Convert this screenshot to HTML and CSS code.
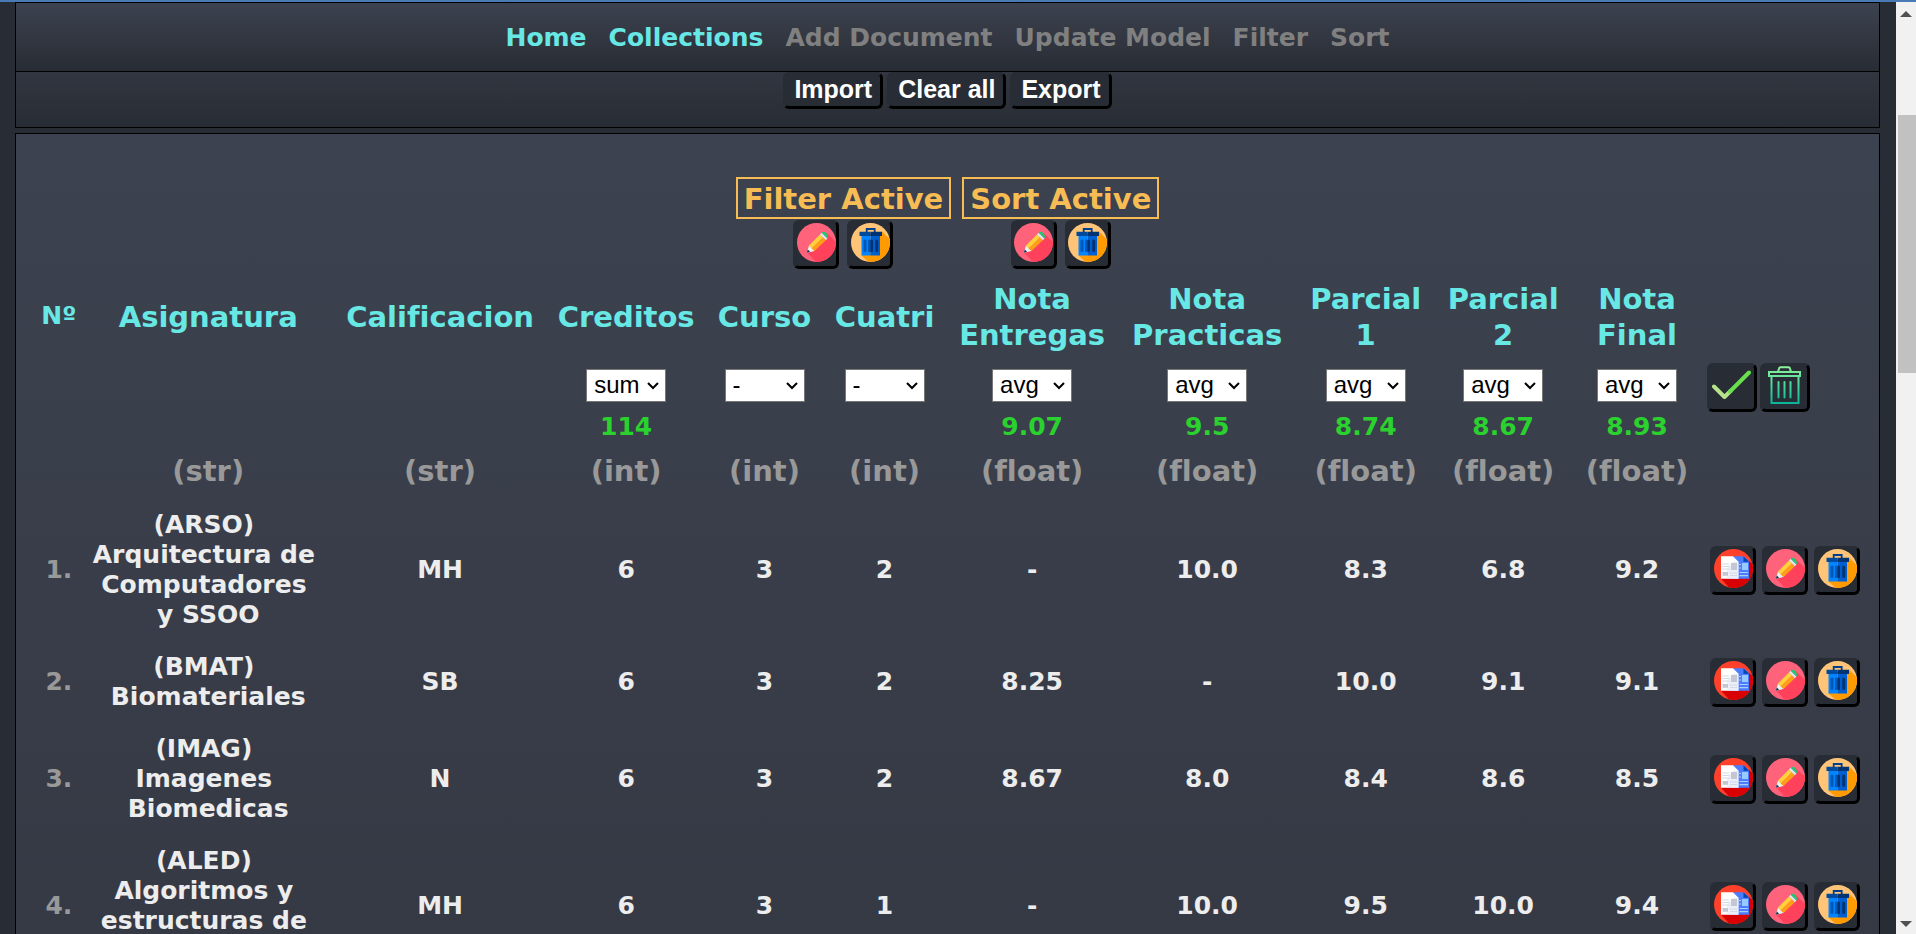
FILE: index.html
```html
<!DOCTYPE html>
<html lang="es">
<head>
<meta charset="utf-8">
<title>Collections</title>
<link rel="stylesheet" href="styles.css">
</head>
<body>
<svg class="sprite" aria-hidden="true">
  <defs>
    <linearGradient id="mint" x1="0" y1="0" x2="0" y2="39" gradientUnits="userSpaceOnUse">
      <stop offset="0" stop-color="#8ff59c"/><stop offset="1" stop-color="#05b29a"/>
    </linearGradient>
    <clipPath id="disc"><circle cx="19.5" cy="19.5" r="19.5"/></clipPath>
  </defs>
  <symbol id="pencil" viewBox="0 0 39 39">
    <g clip-path="url(#disc)">
      <path fill="#ff637b" d="M0 0h39v39H0z"/>
      <path fill="#ff415b" d="M10 29.500 29.500 10 42 22v20H22z"/>
      <path fill="#e8f4ee" d="M9.800 29.800 12 22.500 17.500 28z"/>
      <path fill="#14344f" d="m9.800 29.800 1-3.200 2.300 2.200z"/>
      <path fill="#ffd23c" d="M12 22.500 23 11.500l3 3-11.200 11z"/>
      <path fill="#ff9f19" d="m14.800 25.500 11.200-11 2.800 2.700L17.500 28z"/>
      <path fill="#dce6ee" d="m23 11.500 1.700-1.700 5.800 5.700-1.700 1.700z"/>
      <path fill="#1fc978" d="M24.700 9.800c1.500-1.400 3-1.200 4.400.2s2.700 3.700 1.400 5.500z"/>
    </g>
  </symbol>
  <symbol id="bin" viewBox="0 0 39 39">
    <g clip-path="url(#disc)">
      <path fill="#ffc477" d="M0 0h39v39H0z"/>
      <path fill="#ff9b00" d="M31 8.500 42 19.500V42H21l-10.500-9.500z"/>
      <path fill="none" stroke="#003f8c" stroke-width="1.800" d="M15.700 9.500V6h8v3.500"/>
      <path fill="#0084ff" d="M10.500 11h9v21.500h-9z"/>
      <path fill="#005fd0" d="M19.500 11H29v21.500h-9.500z"/>
      <path fill="#004a9c" d="M8.500 8.700h11V13h-11z"/>
      <path fill="#003374" d="M19.500 8.700H31V13H19.500z"/>
      <g stroke-width="3" stroke-linecap="round">
        <path stroke="#0057b8" d="M14 18v9.500M18.500 18v9.500"/>
        <path stroke="#003374" d="M20.500 18v9.500M25.700 18v9.500"/>
      </g>
      <path fill="#0057b8" d="M17 17h2.500v12H17z"/>
    </g>
  </symbol>
  <symbol id="doc" viewBox="0 0 39 39">
    <g clip-path="url(#disc)">
      <path fill="#ff412b" d="M0 0h39v39H0z"/>
      <path fill="#d80000" d="M35 11.500 42 18v24H18L7 29.500z"/>
      <path fill="#4a7dff" d="M18 7.200h12l5 5v17.500H18z"/>
      <path fill="#0046b5" d="M29.500 7.200 35 12.700h-5.500z"/>
      <path fill="#fff" d="M7 7.200h12l5.500 5.500v17H7z"/>
      <path fill="#dce4f8" d="M19 12.700h5.500v17H13V20z" opacity=".6"/>
      <path fill="#c4c6d0" d="M17 14h6v7h-6zM8.500 23h5.500v3.800H8.500z"/>
      <path stroke="#d5d9e6" d="M8.500 15h7M8.500 17.500h7M8.500 20h7M16 24h7M16 26.500h7"/>
      <path fill="#98c9ff" d="M28 14h6v7h-6z"/>
      <path stroke="#a8ceff" stroke-width="1.200" d="M25.500 23.500H34M25.500 26.700H34M25 15.500h2M25 19h2"/>
    </g>
  </symbol>
  <symbol id="check" viewBox="0 0 39 39">
    <g fill="none" stroke-width="4" stroke-linecap="round" stroke-linejoin="round">
      <path stroke="#b5e389" d="M2 20.500 12.500 31 19 24.500"/>
      <path stroke="#68df4c" d="M18 25.500 37 6.500"/>
    </g>
  </symbol>
  <symbol id="can" viewBox="0 0 39 39">
    <g fill="none" stroke="url(#mint)" stroke-width="2">
      <path d="M4 6h31v4H4zM6.500 10v27h27V10M13 6l1-3.500Q14.300 1.200 15.500 1.200h8q1.200 0 1.500 1.300L26 6"/>
      <path d="M13.500 16v15.500M19.500 16v15.500M25.500 16v15.500" stroke-linecap="round"/>
    </g>
  </symbol>
</svg>

<div class="window">
  <div class="page">
    <nav class="bar nav">
      <a href="#home">Home</a>
      <a href="#collections">Collections</a>
      <a class="off" href="#add">Add Document</a>
      <a class="off" href="#update">Update Model</a>
      <a class="off" href="#filter">Filter</a>
      <a class="off" href="#sort">Sort</a>
    </nav>
    <div class="bar tools">
      <button type="button" class="btn">Import</button>
      <button type="button" class="btn">Clear all</button>
      <button type="button" class="btn">Export</button>
    </div>

    <main class="panel">
      <div class="states">
        <section class="state">
          <h2>Filter Active</h2>
          <div class="pair">
            <button type="button" class="btn icon" aria-label="Edit filter"><svg><use href="#pencil"/></svg></button>
            <button type="button" class="btn icon" aria-label="Delete filter"><svg><use href="#bin"/></svg></button>
          </div>
        </section>
        <section class="state">
          <h2>Sort Active</h2>
          <div class="pair">
            <button type="button" class="btn icon" aria-label="Edit sort"><svg><use href="#pencil"/></svg></button>
            <button type="button" class="btn icon" aria-label="Delete sort"><svg><use href="#bin"/></svg></button>
          </div>
        </section>
      </div>

      <table class="grid">
        <colgroup>
          <col class="c-num"><col class="c-name"><col class="c-grade"><col class="c-cred"><col class="c-year"><col class="c-term">
          <col class="c-work"><col class="c-prac"><col class="c-p1"><col class="c-p2"><col class="c-final"><col class="c-act">
        </colgroup>
        <thead>
          <tr class="titles">
            <th class="small">Nº</th><th>Asignatura</th><th>Calificacion</th><th>Creditos</th><th>Curso</th><th>Cuatri</th>
            <th>Nota Entregas</th><th>Nota Practicas</th><th>Parcial 1</th><th>Parcial 2</th><th>Nota Final</th><td></td>
          </tr>
          <tr class="totals">
            <td></td><td></td><td></td>
            <td><select aria-label="Creditos"><option>sum</option><option>avg</option><option>-</option></select><output>114</output></td>
            <td><select aria-label="Curso"><option>-</option><option>sum</option><option>avg</option></select></td>
            <td><select aria-label="Cuatri"><option>-</option><option>sum</option><option>avg</option></select></td>
            <td><select aria-label="Nota Entregas"><option>avg</option><option>sum</option><option>-</option></select><output>9.07</output></td>
            <td><select aria-label="Nota Practicas"><option>avg</option><option>sum</option><option>-</option></select><output>9.5</output></td>
            <td><select aria-label="Parcial 1"><option>avg</option><option>sum</option><option>-</option></select><output>8.74</output></td>
            <td><select aria-label="Parcial 2"><option>avg</option><option>sum</option><option>-</option></select><output>8.67</output></td>
            <td><select aria-label="Nota Final"><option>avg</option><option>sum</option><option>-</option></select><output>8.93</output></td>
            <td class="confirm"><div class="apply">
              <button type="button" class="btn icon wide" aria-label="Apply"><svg><use href="#check"/></svg></button>
              <button type="button" class="btn icon wide" aria-label="Clear"><svg><use href="#can"/></svg></button>
            </div></td>
          </tr>
          <tr class="types">
            <td></td><td>(str)</td><td>(str)</td><td>(int)</td><td>(int)</td><td>(int)</td>
            <td>(float)</td><td>(float)</td><td>(float)</td><td>(float)</td><td>(float)</td><td></td>
          </tr>
        </thead>
        <tbody>
          <tr>
            <td class="num">1.</td><td class="name">(ARSO) Arquitectura de Computadores y SSOO</td><td>MH</td><td>6</td><td>3</td><td>2</td>
            <td>-</td><td>10.0</td><td>8.3</td><td>6.8</td><td>9.2</td>
            <td class="act"><div class="trio">
              <button type="button" class="btn icon" aria-label="Duplicate"><svg><use href="#doc"/></svg></button>
              <button type="button" class="btn icon" aria-label="Edit"><svg><use href="#pencil"/></svg></button>
              <button type="button" class="btn icon" aria-label="Delete"><svg><use href="#bin"/></svg></button>
            </div></td>
          </tr>
          <tr>
            <td class="num">2.</td><td class="name">(BMAT) Biomateriales</td><td>SB</td><td>6</td><td>3</td><td>2</td>
            <td>8.25</td><td>-</td><td>10.0</td><td>9.1</td><td>9.1</td>
            <td class="act"><div class="trio">
              <button type="button" class="btn icon" aria-label="Duplicate"><svg><use href="#doc"/></svg></button>
              <button type="button" class="btn icon" aria-label="Edit"><svg><use href="#pencil"/></svg></button>
              <button type="button" class="btn icon" aria-label="Delete"><svg><use href="#bin"/></svg></button>
            </div></td>
          </tr>
          <tr>
            <td class="num">3.</td><td class="name">(IMAG) Imagenes Biomedicas</td><td>N</td><td>6</td><td>3</td><td>2</td>
            <td>8.67</td><td>8.0</td><td>8.4</td><td>8.6</td><td>8.5</td>
            <td class="act"><div class="trio">
              <button type="button" class="btn icon" aria-label="Duplicate"><svg><use href="#doc"/></svg></button>
              <button type="button" class="btn icon" aria-label="Edit"><svg><use href="#pencil"/></svg></button>
              <button type="button" class="btn icon" aria-label="Delete"><svg><use href="#bin"/></svg></button>
            </div></td>
          </tr>
          <tr>
            <td class="num">4.</td><td class="name">(ALED) Algoritmos y estructuras de datos</td><td>MH</td><td>6</td><td>3</td><td>1</td>
            <td>-</td><td>10.0</td><td>9.5</td><td>10.0</td><td>9.4</td>
            <td class="act"><div class="trio">
              <button type="button" class="btn icon" aria-label="Duplicate"><svg><use href="#doc"/></svg></button>
              <button type="button" class="btn icon" aria-label="Edit"><svg><use href="#pencil"/></svg></button>
              <button type="button" class="btn icon" aria-label="Delete"><svg><use href="#bin"/></svg></button>
            </div></td>
          </tr>
        </tbody>
      </table>
    </main>
  </div>
  <div class="scroll" aria-hidden="true">
    <span class="arrow up"></span>
    <div class="track"><div class="thumb"></div></div>
    <span class="arrow down"></span>
  </div>
</div>
</body>
</html>
```
FILE: styles.css
```css
* {
  box-sizing: border-box;
}

body {
  margin: 0;
  background: #282c34;
  color: #ededed;
  font: bold 25px/30px "DejaVu Sans", Verdana, sans-serif;
  overflow: hidden;
}

.sprite {
  position: absolute;
  width: 0;
  height: 0;
}

.window {
  display: flex;
  height: 100vh;
  border-top: 2px solid #4a7ab5;
}

.page {
  flex: 1;
  min-width: 0;
  height: 100%;
  display: flex;
  flex-direction: column;
  padding: 0 16px 0 15px;
  overflow: hidden;
}

.bar {
  flex: none;
  display: flex;
  justify-content: center;
  border: 1px solid #000;
}

.nav {
  gap: 22px;
  padding: 20px 0 18px;
  background: linear-gradient(#3c424f, #282c34);
}

.nav a {
  color: #68e8e4;
  text-decoration: none;
}

.nav .off {
  color: #808080;
}

.tools {
  gap: 4px;
  border-top: 0;
  padding-bottom: 18px;
  margin-bottom: 5px;
  background: linear-gradient(#323640, #282c34);
}

.btn {
  margin: 0;
  padding: 0 8px 3px;
  border: 3px solid;
  border-color: #282c34 #000 #000 #282c34;
  border-radius: 6px;
  background: #282c34;
  color: #fff;
  font: bold 25px/28px "Liberation Sans", Arial, sans-serif;
}

.icon {
  display: flex;
  align-items: flex-start;
  justify-content: center;
  width: 46px;
  height: 49px;
  padding: 0;
}

.icon.wide {
  width: 50px;
}

.icon svg {
  flex: none;
  width: 39px;
  height: 39px;
}

.panel {
  flex: 1 0 auto;
  padding: 43px 11px 0 19px;
  border: 1px solid #000;
  background: linear-gradient(#3c424f, #353944);
}

.states {
  display: flex;
  justify-content: center;
  gap: 11px;
  padding-right: 8px;
}

.state h2 {
  margin: 0 0 1px;
  padding: 2px 6px 0;
  border: 2px solid #f7bc53;
  color: #f7bc53;
  font-size: 29px;
  line-height: 36px;
}

.pair {
  display: flex;
  justify-content: center;
  gap: 8px;
}

.grid {
  width: 100%;
  table-layout: fixed;
  border-collapse: collapse;
  text-align: center;
}

.c-num { width: 2.6%; }
.c-name { width: 13.7%; }
.c-grade { width: 11.6%; }
.c-cred { width: 8.7%; }
.c-year { width: 6.4%; }
.c-term { width: 6.7%; }
.c-work { width: 9.4%; }
.c-prac { width: 9.7%; }
.c-p1 { width: 7.6%; }
.c-p2 { width: 7.4%; }
.c-final { width: 7.2%; }
.c-act { width: 9%; }

.grid th,
.grid td {
  padding: 11px 0;
}

.grid .titles th {
  padding: 12px 10px 10px;
  color: #68e8e4;
  font-size: 29px;
  line-height: 36px;
}

.grid .titles .small {
  padding: 10px 0;
  font-size: 25px;
}

.grid .totals td {
  padding: 6px 0 1px;
  vertical-align: top;
}

.grid .totals .confirm {
  padding: 0 0 0 4px;
}

.totals select {
  appearance: none;
  display: block;
  width: 80px;
  height: 33px;
  margin: 0 auto 10px;
  padding: 0 7px 1px;
  border: 1px solid #767676;
  border-radius: 0;
  background: #fff url("data:image/svg+xml,%3Csvg xmlns='http://www.w3.org/2000/svg' width='12' height='8'%3E%3Cpath d='M1 1l5 5 5-5' fill='none' stroke='%23000' stroke-width='2'/%3E%3C/svg%3E") no-repeat right 6px center;
  color: #000;
  font: 24px/30px "Liberation Sans", Arial, sans-serif;
}

.totals output {
  display: block;
  color: #2bd12e;
}

.apply,
.trio {
  display: flex;
  gap: 3px;
}

.trio {
  justify-content: center;
  gap: 6px;
}

.grid .types td {
  padding: 10px 0;
  color: #999;
  font-size: 29px;
  line-height: 36px;
}

.grid .num {
  color: #999;
}

.grid .name {
  padding: 11px 8px;
  white-space: break-spaces;
}

.grid .act {
  padding: 0;
}

.scroll {
  flex: none;
  display: flex;
  flex-direction: column;
  align-items: center;
  width: 20px;
  padding: 9px 0 7px;
  background: #f1f1f1;
}

.arrow {
  border: 6px solid transparent;
}

.up {
  border-top: 0;
  border-bottom-color: #505050;
}

.down {
  border-bottom: 0;
  border-top-color: #505050;
}

.track {
  flex: 1;
  align-self: stretch;
  padding: 98px 0 0 2px;
}

.thumb {
  height: 32%;
  background: #c1c1c1;
}
```
